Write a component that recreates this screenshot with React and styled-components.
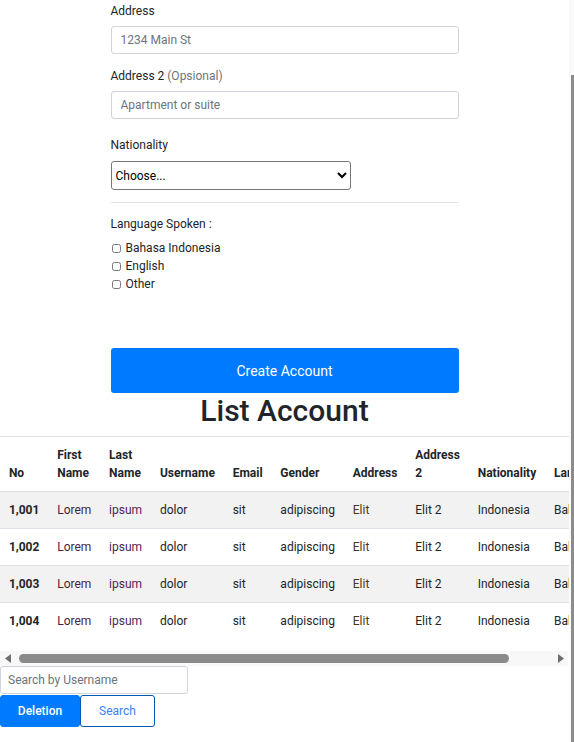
import React from 'react';
import styled, { createGlobalStyle } from 'styled-components';

const GlobalStyle = createGlobalStyle`
  body {
    margin: 0;
    font-family: Roboto, "Helvetica Neue", Arial, sans-serif;
    font-size: 12px;
    color: #212529;
    background: #fff;
  }
  * {
    box-sizing: border-box;
  }
`;

const Shell = styled.div`
  display: flex;
  height: 742px;
  overflow: hidden;
`;

const Main = styled.div`
  flex: 1;
  min-width: 0;
`;

const Rail = styled.div`
  width: 5px;
  flex-shrink: 0;
  display: flex;
  justify-content: flex-end;
  background: #fafafa;
`;

const RailThumb = styled.div`
  width: 3px;
  margin-top: 75px;
  height: 667px;
  background: #8c8c8c;
`;

const FormWrap = styled.form`
  width: 348px;
  margin: 0 auto;
  padding-top: 2px;
`;

const FieldGroup = styled.div`
  margin-bottom: ${p => p.$gap ?? 13}px;
`;

const Label = styled.label`
  display: block;
  line-height: 18px;
  margin-bottom: ${p => p.$gap || 6}px;
`;

const Muted = styled.span`
  color: #6c757d;
`;

const TextInput = styled.input`
  display: block;
  width: ${p => p.$width || '100%'};
  height: 28px;
  padding: 0 ${p => p.$pad || 9}px;
  font-family: inherit;
  font-size: 12px;
  color: #495057;
  border: 1px solid #ced4da;
  border-radius: 3px;
  background: #fff;

  &::placeholder {
    color: #6c757d;
  }
`;

const Select = styled.select`
  display: block;
  width: 240px;
  height: 29px;
  font-family: inherit;
  font-size: 12px;
  color: #000;
  border: 1px solid #767676;
  border-radius: 3px;
  background: #fff;
  padding: 0;
`;

const Divider = styled.hr`
  border: 0;
  border-top: 1px solid #e3e3e3;
  margin: 12px 0;
`;

const CheckList = styled.div`
  margin-top: 6px;
`;

const CheckRow = styled.label`
  display: flex;
  align-items: center;
  height: 18px;
  line-height: 18px;
`;

const Check = styled.input`
  width: 9px;
  height: 9px;
  margin: 0 5px 0 1px;
`;

const SubmitButton = styled.button`
  display: block;
  width: 100%;
  height: 45px;
  margin-top: 55px;
  border: 0;
  border-radius: 3px;
  background: #007bff;
  color: #fff;
  font-family: inherit;
  font-size: 14px;
`;

const Heading = styled.h2`
  margin: 0 0 7px;
  text-align: center;
  font-size: 30px;
  font-weight: 500;
  line-height: 36px;
`;

const TableScroll = styled.div`
  width: 100%;
  overflow-x: auto;
`;

const Table = styled.table`
  width: 100%;
  border-collapse: collapse;
  margin-bottom: 12px;
  font-size: 12px;
  line-height: 18px;

  th,
  td {
    padding: 9px 8.9px;
    border-top: 1px solid #dee2e6;
    text-align: left;
  }

  th {
    vertical-align: bottom;
    font-weight: 700;
  }

  td {
    vertical-align: top;
  }

  tbody tr:nth-child(odd) {
    background: #f2f2f2;
  }
`;

const Cell = styled.td`
  color: ${p => p.$color || '#212529'};
  font-weight: ${p => (p.$bold ? 700 : 400)};
`;

const ScrollTrack = styled.div`
  display: flex;
  align-items: center;
  height: 15px;
  margin-right: 1px;
  background: #f8f8f8;
`;

const ScrollArrow = styled.div`
  width: 15px;
  height: 15px;
  display: flex;
  align-items: center;
  justify-content: center;
  flex-shrink: 0;
`;

const ScrollThumb = styled.div`
  width: ${p => p.$width}px;
  height: 9px;
  margin-left: ${p => p.$offset}px;
  border-radius: 5px;
  background: #8a8a8a;
`;

const Spacer = styled.div`
  flex: 1;
`;

const ButtonRow = styled.div`
  display: flex;
  margin-top: 1px;
`;

const ActionButton = styled.button`
  height: 32px;
  width: ${p => p.$width}px;
  font-family: inherit;
  font-size: 12px;
  font-weight: ${p => (p.$primary ? 500 : 400)};
  border-radius: 3px;
  border: 1px solid ${p => (p.$primary ? '#007bff' : '#0056b3')};
  background: ${p => (p.$primary ? '#007bff' : '#fff')};
  color: ${p => (p.$primary ? '#fff' : '#3b82f6')};
`;

const headers = [
  'No',
  'First Name',
  'Last Name',
  'Username',
  'Email',
  'Gender',
  'Address',
  'Address 2',
  'Nationality',
  'Language',
];

const rows = ['1,001', '1,002', '1,003', '1,004'];

function Arrow({ dir }) {
  return (
    <ScrollArrow>
      <svg width="6" height="9" viewBox="0 0 6 9">
        {dir === 'left' ? (
          <polygon points="6,0 6,9 0,4.5" fill="#6e6e6e" />
        ) : (
          <polygon points="0,0 0,9 6,4.5" fill="#6e6e6e" />
        )}
      </svg>
    </ScrollArrow>
  );
}

export default function App() {
  return (
    <Shell>
      <GlobalStyle />
      <Main>
        <FormWrap onSubmit={e => e.preventDefault()}>
          <FieldGroup>
            <Label>Address</Label>
            <TextInput placeholder="1234 Main St" />
          </FieldGroup>
          <FieldGroup $gap={17}>
            <Label>
              Address 2 <Muted>(Opsional)</Muted>
            </Label>
            <TextInput placeholder="Apartment or suite" />
          </FieldGroup>
          <FieldGroup $gap={0}>
            <Label $gap={7}>Nationality</Label>
            <Select defaultValue="">
              <option value="">Choose...</option>
              <option>Indonesia</option>
            </Select>
          </FieldGroup>
          <Divider />
          <Label>Language Spoken :</Label>
          <CheckList>
            <CheckRow>
              <Check type="checkbox" />
              Bahasa Indonesia
            </CheckRow>
            <CheckRow>
              <Check type="checkbox" />
              English
            </CheckRow>
            <CheckRow>
              <Check type="checkbox" />
              Other
            </CheckRow>
          </CheckList>
          <SubmitButton type="submit">Create Account</SubmitButton>
        </FormWrap>

        <Heading>List Account</Heading>
        <TableScroll>
          <Table>
            <thead>
              <tr>
                {headers.map(h => (
                  <th key={h}>{h}</th>
                ))}
              </tr>
            </thead>
            <tbody>
              {rows.map(no => (
                <tr key={no}>
                  <Cell $bold>{no}</Cell>
                  <Cell $color="#4a1d3c">Lorem</Cell>
                  <Cell $color="#4f1f5a">ipsum</Cell>
                  <Cell>dolor</Cell>
                  <Cell>sit</Cell>
                  <Cell>adipiscing</Cell>
                  <Cell $color="#4a381d">Elit</Cell>
                  <Cell>Elit 2</Cell>
                  <Cell>Indonesia</Cell>
                  <Cell>Bahasa</Cell>
                </tr>
              ))}
            </tbody>
          </Table>
        </TableScroll>
        <ScrollTrack>
          <Arrow dir="left" />
          <ScrollThumb $offset={4} $width={490} />
          <Spacer />
          <Arrow dir="right" />
        </ScrollTrack>
        <TextInput $width="188px" $pad={7} placeholder="Search by Username" />
        <ButtonRow>
          <ActionButton $primary $width={80}>Deletion</ActionButton>
          <ActionButton $width={75}>Search</ActionButton>
        </ButtonRow>
      </Main>
      <Rail>
        <RailThumb />
      </Rail>
    </Shell>
  );
}
